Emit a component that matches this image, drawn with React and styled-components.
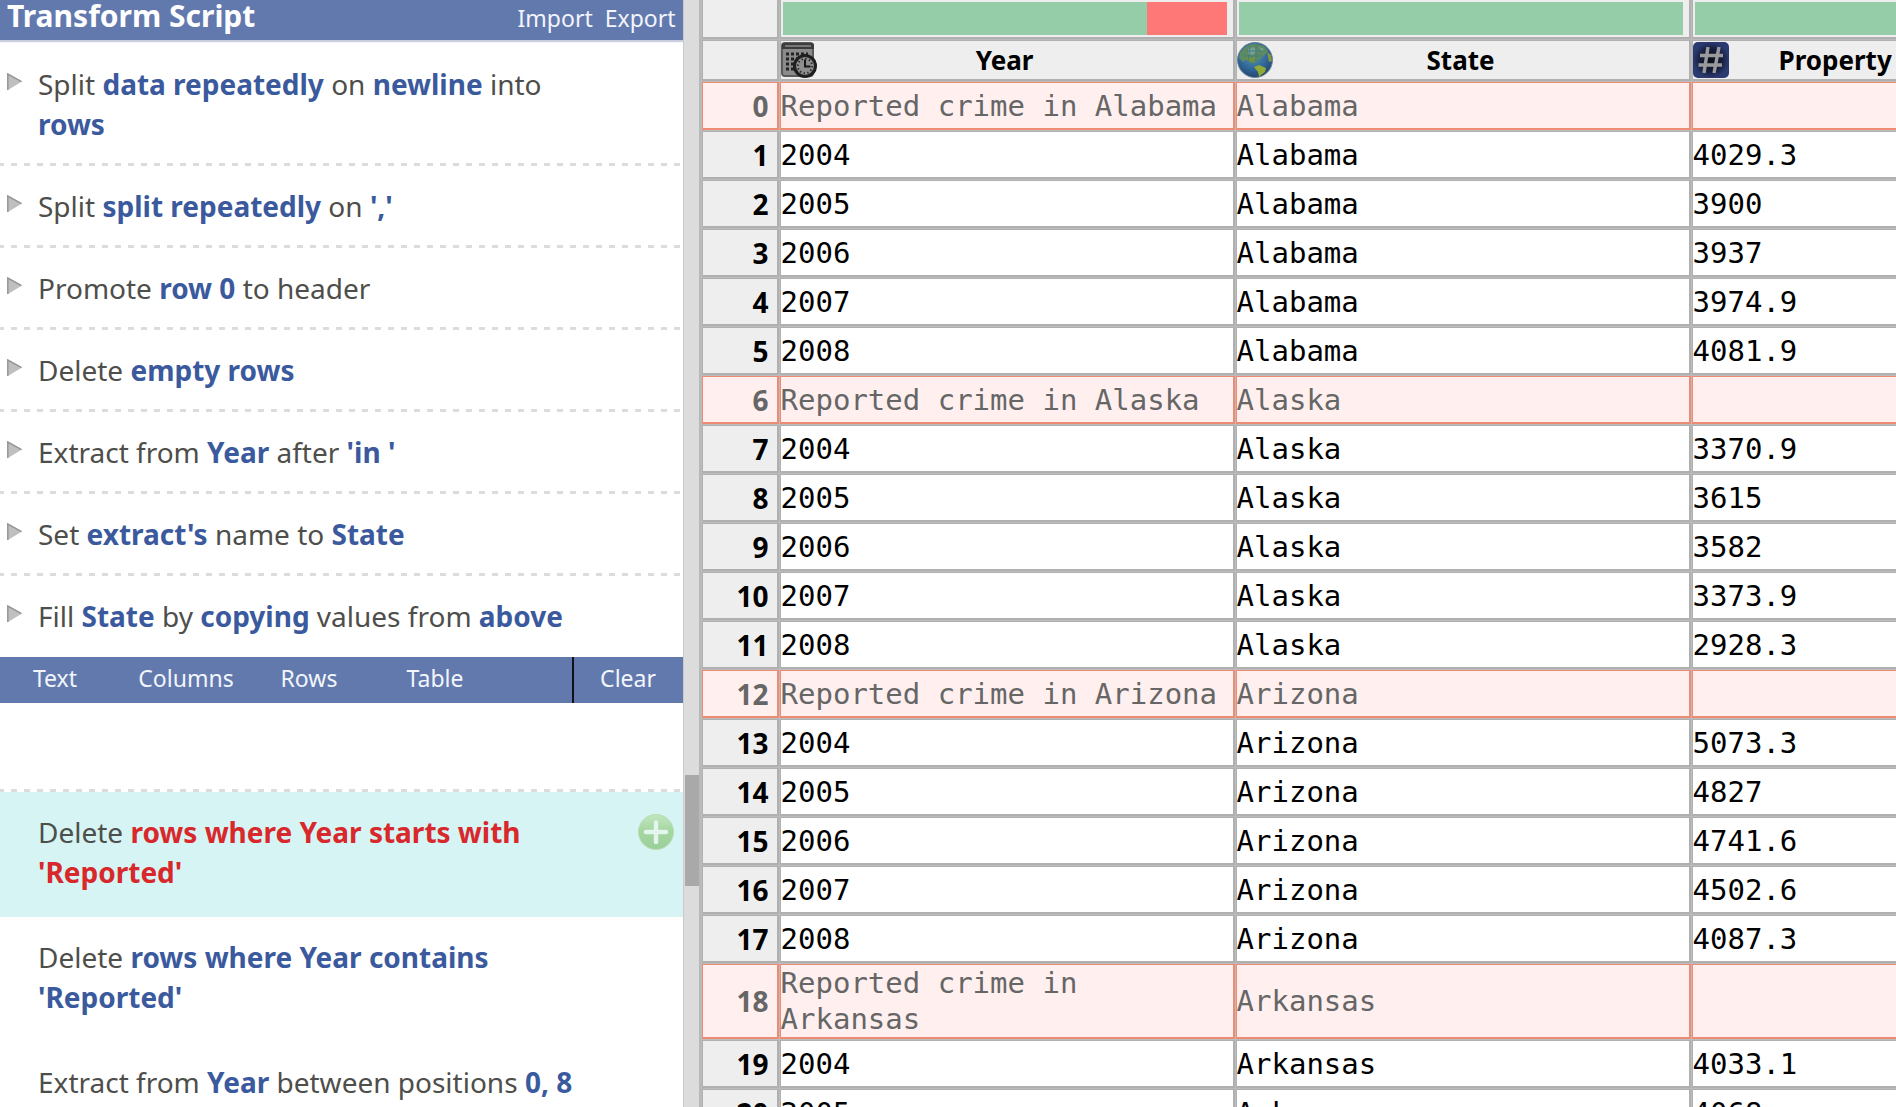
import React from "react";
import styled, { createGlobalStyle, css } from "styled-components";

const sans = `"Noto Sans", "Open Sans", sans-serif`;
const mono = `"DejaVu Sans Mono", "Liberation Mono", monospace`;

const GlobalStyle = createGlobalStyle`
  *, *::before, *::after { box-sizing: border-box; }
  body {
    margin: 0;
    overflow: hidden;
    background: #fff;
    font-family: ${sans};
  }
`;

const dashes = css`
  content: "";
  display: block;
  height: 3px;
  background: repeating-linear-gradient(
    90deg,
    #dcdcdc 0 4px,
    transparent 4px 11px,
    #dcdcdc 11px 13px
  );
`;

const Page = styled.div`
  display: flex;
  height: 100vh;
  overflow: hidden;
`;

const Sidebar = styled.aside`
  flex: 0 0 36%;
  min-width: 0;
  overflow: hidden;
`;

const TitleBar = styled.header`
  display: flex;
  align-items: baseline;
  gap: 12px;
  height: 40px;
  padding: 0 7px;
  margin-bottom: 4px;
  color: #fff;
  background: #6279ae;
  box-shadow: 0 2px 1px #c9cede;
`;

const Title = styled.h1`
  flex: 1;
  margin: 0;
  font-size: 30px;
  line-height: 32px;
  font-weight: 700;
`;

const BarButton = styled.button`
  border: 0;
  padding: 0;
  background: none;
  color: #f2f5fb;
  font-family: ${sans};
  font-size: 23px;
  line-height: 30px;
  cursor: pointer;
`;

const ScriptList = styled.ol`
  list-style: none;
  margin: 0;
  padding: 0 0 2px;
`;

const Step = styled.li`
  &:not(:last-child)::after { ${dashes} }
`;

const StepBody = styled.div`
  display: flex;
  align-items: flex-start;
  padding: 20px 90px 19px 7px;
`;

const Expander = styled.button`
  flex: 0 0 31px;
  height: 36px;
  display: flex;
  align-items: center;
  border: 0;
  padding: 0;
  background: none;
  cursor: pointer;
`;

const Phrase = styled.p`
  flex: 1;
  margin: 0;
  font-size: 28px;
  line-height: 40px;
  color: #4e4e4b;
`;

const Term = styled.b`
  font-weight: 700;
  color: ${(p) => (p.$active ? "#d8282c" : "#3b5a9e")};
`;

const Menu = styled.nav`
  display: grid;
  grid-template-columns: 110px 152px 94px 158px 1fr 111px;
  height: 46px;
  background: #6279ae;
`;

const MenuButton = styled(BarButton)`
  padding-bottom: 4px;
  grid-column: ${(p) => (p.$end ? "6" : "auto")};
  border-left: ${(p) => (p.$end ? "2px solid #101018" : "0")};
`;

const Suggestions = styled.ul`
  list-style: none;
  margin: 0;
  padding: 86px 0 0;
  &::before { ${dashes} }
`;

const Suggestion = styled.li`
  display: flex;
  align-items: flex-start;
  padding: 20px 9px 25px 38px;
  background: ${(p) => (p.$active ? "#d5f4f3" : "#fff")};
`;

const AddSlot = styled.div`
  flex: 0 0 81px;
  display: flex;
  justify-content: flex-end;
`;

const AddButton = styled.button`
  display: flex;
  align-items: center;
  height: 40px;
  border: 0;
  padding: 0;
  background: none;
  cursor: pointer;
`;

const Track = styled.div`
  position: relative;
  flex: 0 0 18px;
  background: #dcdcdc;
  border-left: 1px solid #cacaca;
  border-right: 2px solid #b8b8b8;
`;

const Thumb = styled.div`
  position: absolute;
  top: 70%;
  left: 1px;
  right: 0;
  height: 111px;
  background: #a9a9a9;
`;

const Main = styled.main`
  flex: 1;
  min-width: 0;
  overflow: hidden;
`;

const Grid = styled.table`
  width: calc(100% + 4px);
  margin-top: -1px;
  table-layout: fixed;
  border-collapse: separate;
  border-spacing: 1px;
  background: #bcbcbc;
`;

const Col = styled.col`
  width: ${(p) => (p.$w ? `${p.$w}px` : "auto")};
`;

const HeadCell = styled.th`
  height: ${(p) => p.$h}px;
  padding: 0;
  background: #eee;
  border: solid #b0b0b0;
  border-width: ${(p) => (p.$first ? 0 : 1)}px 2px 2px 1px;
  overflow: hidden;
`;

const Quality = styled.div`
  display: flex;
  height: 33px;
  margin: 0 ${(p) => (p.$cut ? 0 : 6)}px 0 2px;
`;

const Share = styled.span`
  flex: ${(p) => p.$part};
  background: ${(p) => (p.$bad ? "#ff7878" : "#95cda9")};
`;

const Heading = styled.div`
  display: grid;
  grid-template-columns: 36px 1fr ${(p) => (p.$cut ? 0 : 40)}px;
  align-items: center;
  height: 38px;
`;

const Label = styled.span`
  font-size: 26px;
  line-height: 38px;
  white-space: nowrap;
  text-align: ${(p) => (p.$cut ? "left" : "center")};
  padding-left: ${(p) => (p.$cut ? 50 : 0)}px;
`;

const Row = styled.tr`
  --line: ${(p) => (p.$removed ? "#ee8b73" : "#b0b0b0")};
  --fill: ${(p) => (p.$removed ? "#fff0ef" : "#fff")};
  --index: ${(p) => (p.$removed ? "#fff0ef" : "#eee")};
  color: ${(p) => (p.$removed ? "#666" : "#000")};
`;

const Index = styled.th`
  height: 48px;
  padding: 0 8px 0 0;
  text-align: right;
  font-size: 28px;
  line-height: 36px;
  background: var(--index);
  border: solid var(--line);
  border-width: 1px 2px 2px 1px;
`;

const Cell = styled.td`
  height: 48px;
  padding: 0;
  font-family: ${mono};
  font-size: 29px;
  line-height: 36px;
  background: var(--fill);
  border: solid var(--line);
  border-width: 1px 2px 2px 1px;
`;

const Arrow = () => (
  <svg width="16" height="18" viewBox="0 0 16 18" aria-hidden="true">
    <path d="M0.5 0.5 L15 8.6 L0.5 17.2 Z" fill="#bfbfbf" />
    <path d="M0.8 17 V1 L14.5 8.6" fill="none" stroke="#969696" strokeWidth="1.5" />
  </svg>
);

const PlusIcon = () => (
  <svg width="36" height="36" viewBox="0 0 36 36" aria-hidden="true">
    <defs>
      <linearGradient id="plusFill" x1="0" y1="0" x2="0" y2="1">
        <stop offset="0" stopColor="#c3e6c0" />
        <stop offset="0.45" stopColor="#a5d7a1" />
        <stop offset="1" stopColor="#9bcf9b" />
      </linearGradient>
    </defs>
    <circle cx="18" cy="18" r="17.5" fill="url(#plusFill)" stroke="#b5ddb4" />
    <path d="M18 8.5 V28 M8 18 H28" stroke="#e3f6ee" strokeWidth="4.4" strokeLinecap="round" />
  </svg>
);

const DateIcon = () => (
  <svg width="36" height="36" viewBox="0 0 36 36" aria-hidden="true">
    <rect x="1" y="1" width="31" height="33" rx="3" fill="#8b8b8b" stroke="#5c5c5c" strokeWidth="2" />
    <path d="M1 7 V3 Q1 1 4 1 H30 Q33 1 33 3 V7 Z" fill="#3c3c3c" />
    <rect x="4" y="3" width="26" height="2" fill="#777" />
    <path
      d="M5 12 H27 M5 17 H27 M5 22 H16 M5 27 H15"
      stroke="#222"
      strokeWidth="3"
      strokeDasharray="3 2"
    />
    <circle cx="24" cy="24" r="10.5" fill="#8e8e8e" stroke="#1f1f1f" strokeWidth="3" />
    <circle cx="24" cy="24" r="7.2" fill="none" stroke="#2b2b2b" strokeWidth="2" strokeDasharray="1.4 2.37" />
    <path d="M24 17.5 V24.5 H29.5" fill="none" stroke="#161616" strokeWidth="2" />
  </svg>
);

const GlobeIcon = () => (
  <svg width="36" height="36" viewBox="0 0 36 36" aria-hidden="true">
    <defs>
      <radialGradient id="ocean" cx="0.45" cy="0.35" r="0.65">
        <stop offset="0" stopColor="#5d93a6" />
        <stop offset="0.6" stopColor="#32699b" />
        <stop offset="1" stopColor="#24466f" />
      </radialGradient>
    </defs>
    <circle cx="18" cy="18" r="17.5" fill="url(#ocean)" stroke="#6f8598" />
    <path d="M3 11 Q9 2 18 2 L27 4 L31 9 L27 14 L22 17 L19 21 L14 21 L9 18 L6 20 L2 16 Z" fill="#5c8b63" />
    <path d="M11 7 L17 5 L20 9 L16 13 L11 12 Z M22 5 L27 7 L25 10 Z" fill="#76a08c" />
    <path d="M8 14 L14 16 L19 14 L17 19 L12 19 Z" fill="#72933f" />
    <path d="M17 25 L22 23 L29 26 L28 30 L24 33 L22 35 L21 30 Z" fill="#91aa35" />
    <path d="M30 10 L34 13 L35 19 L32 20 Z" fill="#819640" />
    <path d="M10 9 H26 M7 14 H26 M13 5 L11 20 M19 3 V20" stroke="#3f778c" strokeWidth="0.8" />
  </svg>
);

const NumberIcon = () => (
  <svg width="36" height="36" viewBox="0 0 36 36" aria-hidden="true">
    <defs>
      <radialGradient id="navy">
        <stop offset="0" stopColor="#0c1018" />
        <stop offset="0.6" stopColor="#161e3c" />
        <stop offset="1" stopColor="#2b3a70" />
      </radialGradient>
    </defs>
    <rect width="36" height="36" rx="5" fill="url(#navy)" />
    <path d="M15 5 L11 31 M26 5 L21 31 M7 13.5 H30 M5.5 23 H29" stroke="#9a9a9c" strokeWidth="3.4" />
  </svg>
);

const steps = [
  ["Split ", "data repeatedly", " on ", "newline", " into ", "rows"],
  ["Split ", "split repeatedly", " on ", "','"],
  ["Promote ", "row 0", " to header"],
  ["Delete ", "empty rows"],
  ["Extract from ", "Year", " after ", "'in '"],
  ["Set ", "extract's", " name to ", "State"],
  ["Fill ", "State", " by ", "copying", " values from ", "above"],
];

const suggestions = [
  ["Delete ", "rows where Year starts with 'Reported'"],
  ["Delete ", "rows where Year contains 'Reported'"],
  ["Extract from ", "Year", " between positions ", "0, 8"],
];

const states = [
  ["Alabama", ["4029.3", "3900", "3937", "3974.9", "4081.9"]],
  ["Alaska", ["3370.9", "3615", "3582", "3373.9", "2928.3"]],
  ["Arizona", ["5073.3", "4827", "4741.6", "4502.6", "4087.3"]],
  ["Arkansas", ["4033.1", "4068"]],
];

const rows = states.flatMap(([state, rates]) => [
  { removed: true, year: `Reported crime in ${state}`, state, rate: "" },
  ...rates.map((rate, i) => ({ year: String(2004 + i), state, rate })),
]);

const columns = [
  { name: "Year", Icon: DateIcon, good: 82, bad: 18 },
  { name: "State", Icon: GlobeIcon, good: 1 },
  { name: "Property", Icon: NumberIcon, good: 1, cut: true },
];

const renderPhrase = (parts, active) =>
  parts.map((part, i) =>
    i % 2 ? (
      <Term key={i} $active={active}>
        {part}
      </Term>
    ) : (
      part
    )
  );

export default function App() {
  return (
    <>
      <GlobalStyle />
      <Page>
        <Sidebar>
          <TitleBar>
            <Title>Transform Script</Title>
            <BarButton>Import</BarButton>
            <BarButton>Export</BarButton>
          </TitleBar>
          <ScriptList>
            {steps.map((parts, i) => (
              <Step key={i}>
                <StepBody>
                  <Expander aria-label="Expand step">
                    <Arrow />
                  </Expander>
                  <Phrase>{renderPhrase(parts)}</Phrase>
                </StepBody>
              </Step>
            ))}
          </ScriptList>
          <Menu>
            <MenuButton>Text</MenuButton>
            <MenuButton>Columns</MenuButton>
            <MenuButton>Rows</MenuButton>
            <MenuButton>Table</MenuButton>
            <MenuButton $end>Clear</MenuButton>
          </Menu>
          <Suggestions>
            {suggestions.map((parts, i) => (
              <Suggestion key={i} $active={i === 0}>
                <Phrase>{renderPhrase(parts, i === 0)}</Phrase>
                <AddSlot>
                  {i === 0 && (
                    <AddButton aria-label="Add to script">
                      <PlusIcon />
                    </AddButton>
                  )}
                </AddSlot>
              </Suggestion>
            ))}
          </Suggestions>
        </Sidebar>
        <Track>
          <Thumb />
        </Track>
        <Main>
          <Grid>
            <colgroup>
              <Col $w={77} />
              <Col $w={455} />
              <Col $w={455} />
              <Col />
            </colgroup>
            <thead>
              <tr>
                <HeadCell $first $h={39} />
                {columns.map(({ name, good, bad, cut }) => (
                  <HeadCell key={name} $first $h={39}>
                    <Quality $cut={cut}>
                      <Share $part={good} />
                      {bad && <Share $part={bad} $bad />}
                    </Quality>
                  </HeadCell>
                ))}
              </tr>
              <tr>
                <HeadCell $h={41} />
                {columns.map(({ name, Icon, cut }) => (
                  <HeadCell key={name} $h={41} scope="col">
                    <Heading $cut={cut}>
                      <Icon />
                      <Label $cut={cut}>{name}</Label>
                    </Heading>
                  </HeadCell>
                ))}
              </tr>
            </thead>
            <tbody>
              {rows.map((row, i) => (
                <Row key={i} $removed={row.removed}>
                  <Index scope="row">{i}</Index>
                  <Cell>{row.year}</Cell>
                  <Cell>{row.state}</Cell>
                  <Cell>{row.rate}</Cell>
                </Row>
              ))}
            </tbody>
          </Grid>
        </Main>
      </Page>
    </>
  );
}
